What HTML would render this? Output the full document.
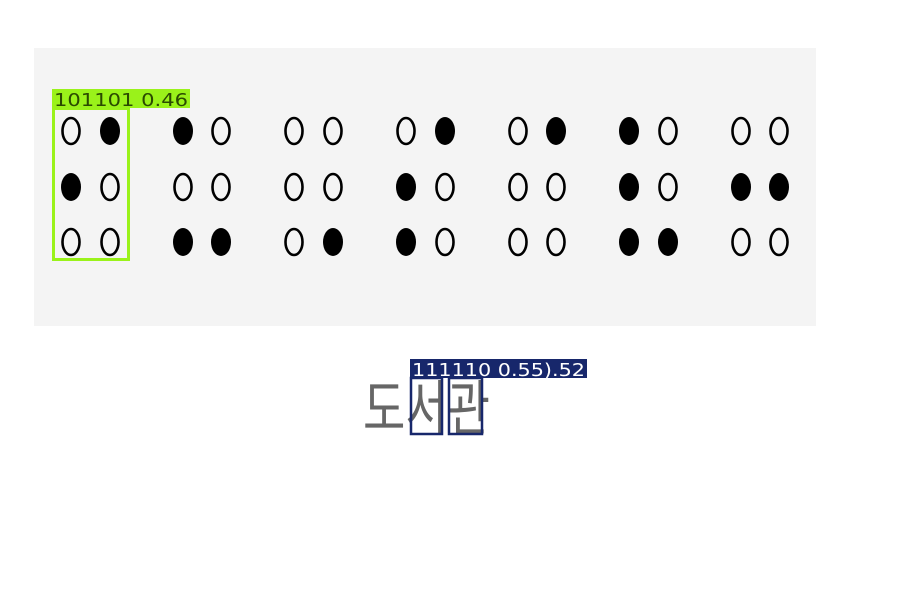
<!DOCTYPE html>
<html><head><meta charset="utf-8"><style>
html,body{margin:0;padding:0;background:#fff;width:900px;height:600px;overflow:hidden}
</style></head><body>
<svg width="900" height="600" xmlns="http://www.w3.org/2000/svg">
<rect x="0" y="0" width="900" height="600" fill="#fff"/>
<rect x="34" y="48" width="782" height="278" fill="#f4f4f4"/>
<g id="dots" stroke="#000" stroke-width="2.6"></g>
<rect x="53.5" y="108.5" width="75" height="151" fill="none" stroke="#9af21a" stroke-width="3"/>
<rect x="52" y="89" width="138" height="19" fill="#9af21a"/>
<text x="54" y="106" font-family="DejaVu Sans, sans-serif" font-weight="normal" font-size="18" fill="#2a4a00" textLength="134" lengthAdjust="spacingAndGlyphs">101101  0.46</text>
<text x="363" y="430" font-family="'Noto Sans CJK KR', sans-serif" font-size="60" fill="#666" textLength="127" lengthAdjust="spacingAndGlyphs">도서관</text>
<rect x="411" y="378" width="31" height="56" fill="none" stroke="#17276b" stroke-width="2.5"/>
<rect x="449" y="378" width="33" height="56" fill="none" stroke="#17276b" stroke-width="2.5"/>
<rect x="410" y="359" width="177" height="19" fill="#17276b"/>
<text x="412" y="376" font-family="DejaVu Sans, sans-serif" font-size="18" fill="#fff" textLength="173" lengthAdjust="spacingAndGlyphs">111110  0.55).52</text>
</svg>
<script>
var cols=[[71,110],[183,221],[294,333],[406,445],[518,556],[629,668],[741,779]];
var rows=[131,187,242];
var p=["01/10/00","10/00/11","00/00/01","01/10/10","01/00/00","10/10/11","00/11/00"];
var g=document.getElementById('dots'),s='';
p.forEach(function(c,i){c.split('/').forEach(function(r,j){for(var k=0;k<2;k++){var f=r[k]=='1';
s+='<ellipse cx="'+cols[i][k]+'" cy="'+rows[j]+'" rx="'+(f?10:8.5)+'" ry="'+(f?14:13)+'" fill="'+(f?'#000':'none')+'" stroke="'+(f?'none':'#000')+'"/>';}});});
g.innerHTML=s;
</script>
</body></html>
